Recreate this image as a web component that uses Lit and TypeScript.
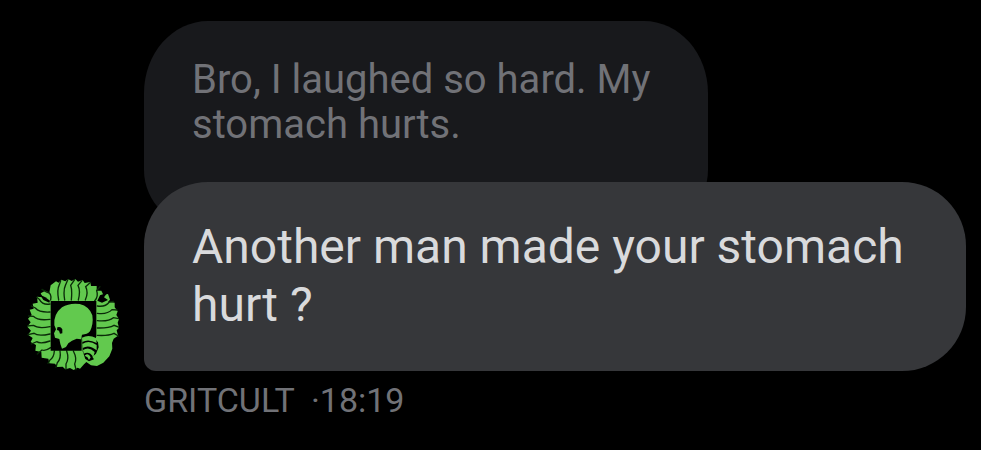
import { LitElement, html, css, svg } from "lit";
import { customElement, property } from "lit/decorators.js";

@customElement("skull-avatar")
class SkullAvatar extends LitElement {
  static styles = css`
    :host {
      display: block;
      width: 92px;
      height: 92px;
      flex: none;
    }
    .art {
      display: block;
      width: 100%;
      height: 100%;
    }
    .bone {
      fill: #62c94e;
    }
    .gap {
      fill: none;
      stroke: #0a2a08;
      stroke-width: 4;
      stroke-linecap: round;
    }
    .notch {
      fill: #000;
    }
  `;

  // Dark seams between neighbouring ribs, grouped by side of the frame.
  private seams = [
    "M92 90 Q96 68 80 66 L66 58",
    "M116 90 Q110 60 118 44 L122 32",
    "M134 90 Q129 60 137 44 L144 28",
    "M154 90 Q157 60 152 46 L164 29",
    "M175 90 Q182 62 174 46 L186 32",
    "M196 90 Q206 68 197 50 L212 37",
    "M224 93 Q236 78 230 62 L240 50",
    "M90 102 Q68 106 58 88 L50 82",
    "M90 126 Q58 128 46 114 L34 108",
    "M90 148 Q54 153 40 139 L26 138",
    "M90 170 Q54 177 40 166 L22 168",
    "M90 192 Q54 200 42 190 L24 194",
    "M90 213 Q62 223 50 215 L34 222",
    "M92 233 Q76 244 66 240 L52 252",
    "M232 108 Q256 112 268 96 L280 94",
    "M232 130 Q262 134 276 119 L291 120",
    "M232 152 Q266 155 280 143 L297 146",
    "M232 174 Q266 175 282 166 L298 172",
    "M232 196 Q264 198 282 190 L295 198",
    "M103 243 Q102 262 90 270 L84 280",
    "M120 243 Q124 266 112 278 L108 292",
    "M140 243 Q148 266 138 282 L138 298",
    "M160 243 Q172 266 164 282 L168 299",
  ];

  render() {
    return html`
      <svg class="art" viewBox="21 27 276 276" role="img" aria-label="GRITCULT">
        <path
          class="bone"
          d="M76 62 L88 68 L92 46 L108 34 L116 38 L124 29 L136 34 L144 27 L155 33 L166 27 L174 35 L188 30 L194 39 L211 36 L213 48 L230 48 L230 62 L244 62 L250 74 L264 72 L270 89 L264 96 L284 98 L284 112 L293 124 L289 135 L297 147 L293 158 L297 173 L290 181 L294 197 L281 206 L276 219 L277 236 L268 259 L250 278 L231 288 L213 286 L199 276 L192 283 L180 296 L173 293 L161 300 L150 294 L136 298 L128 290 L112 291 L105 281 L88 280 L85 266 L65 263 L64 246 L46 242 L48 225 L32 216 L38 204 L24 194 L33 182 L22 170 L32 157 L24 146 L35 135 L29 119 L41 116 L38 101 L53 98 L51 80 L68 82 L62 70 Z"
        />
        ${this.seams.map((d) => svg`<path class="gap" d=${d} />`)}
        <path class="notch" d="M92 93 H229 V200 H185 V242 H92 Z" />
        <path class="notch" d="M60 74 L76 82 L90 92 L88 98 L70 90 Z" />
        <path class="notch" d="M232 92 L240 76 L262 68 L252 82 L264 90 L246 98 Z" />
        <path
          class="bone"
          d="M103 166 Q100 132 126 112 Q148 98 179 102 Q208 109 217 136 Q221 162 210 184 Q202 194 186 194 L183 208 L170 206 L156 212 L145 220 L138 231 L126 236 L121 222 L118 207 L105 203 L102 190 L108 178 Z"
        />
        <path class="notch" d="M112 172 Q122 168 127 178 L127 190 L120 191 L117 182 L111 180 Z" />
        <path class="notch" d="M186 197 H228 V210 L234 217 L236 232 L228 251 L217 260 L222 268 L207 274 L196 267 L188 244 Z" />
        <path class="bone" d="M186 203 Q206 192 228 204 L230 219 Q205 205 187 216 Z" />
        <path class="bone" d="M187 222 Q207 209 230 225 L230 241 Q207 222 188 234 Z" />
        <path class="bone" d="M189 240 Q207 228 224 246 L220 261 Q208 242 191 251 Z" />
        <path class="bone" d="M194 257 Q205 247 212 262 L207 270 Q204 260 194 257 Z" />
      </svg>
    `;
  }
}

@customElement("app-root")
class AppRoot extends LitElement {
  static styles = css`
    :host {
      display: block;
      min-height: 100vh;
      box-sizing: border-box;
      padding: 21px 15px 24px 27px;
      background: #000;
      font-family: Roboto, "Liberation Sans", sans-serif;
    }
    .thread {
      display: grid;
      grid-template-columns: auto 1fr;
      column-gap: 25px;
    }
    .avatar {
      grid-row: 2;
      align-self: end;
    }
    .quote,
    .message,
    .meta {
      grid-column: 2;
      margin: 0;
    }
    .quote {
      justify-self: start;
      box-sizing: border-box;
      max-width: 564px;
      margin-bottom: -48px;
      padding: 36px 48px 83px;
      border-radius: 64px / 72px 72px 60px 60px;
      background: #18191c;
      color: #717277;
      font-size: 40px;
      line-height: 45px;
    }
    .message {
      position: relative;
      padding: 36px 48px 37px;
      border-radius: 64px 64px 64px 12px;
      background: #36373a;
      color: #d9dadc;
      font-size: 48px;
      line-height: 58px;
    }
    .meta {
      display: flex;
      gap: 16px;
      padding-top: 9px;
      color: #717277;
      font-size: 34px;
      line-height: 40px;
    }
  `;

  @property() author = "GRITCULT";
  @property() time = "18:19";

  render() {
    return html`
      <article class="thread">
        <blockquote class="quote">Bro, I laughed so hard. My stomach hurts.</blockquote>
        <skull-avatar class="avatar"></skull-avatar>
        <p class="message">Another man made your stomach hurt ?</p>
        <footer class="meta">
          <span>${this.author}</span>
          <span>·<time>${this.time}</time></span>
        </footer>
      </article>
    `;
  }
}
